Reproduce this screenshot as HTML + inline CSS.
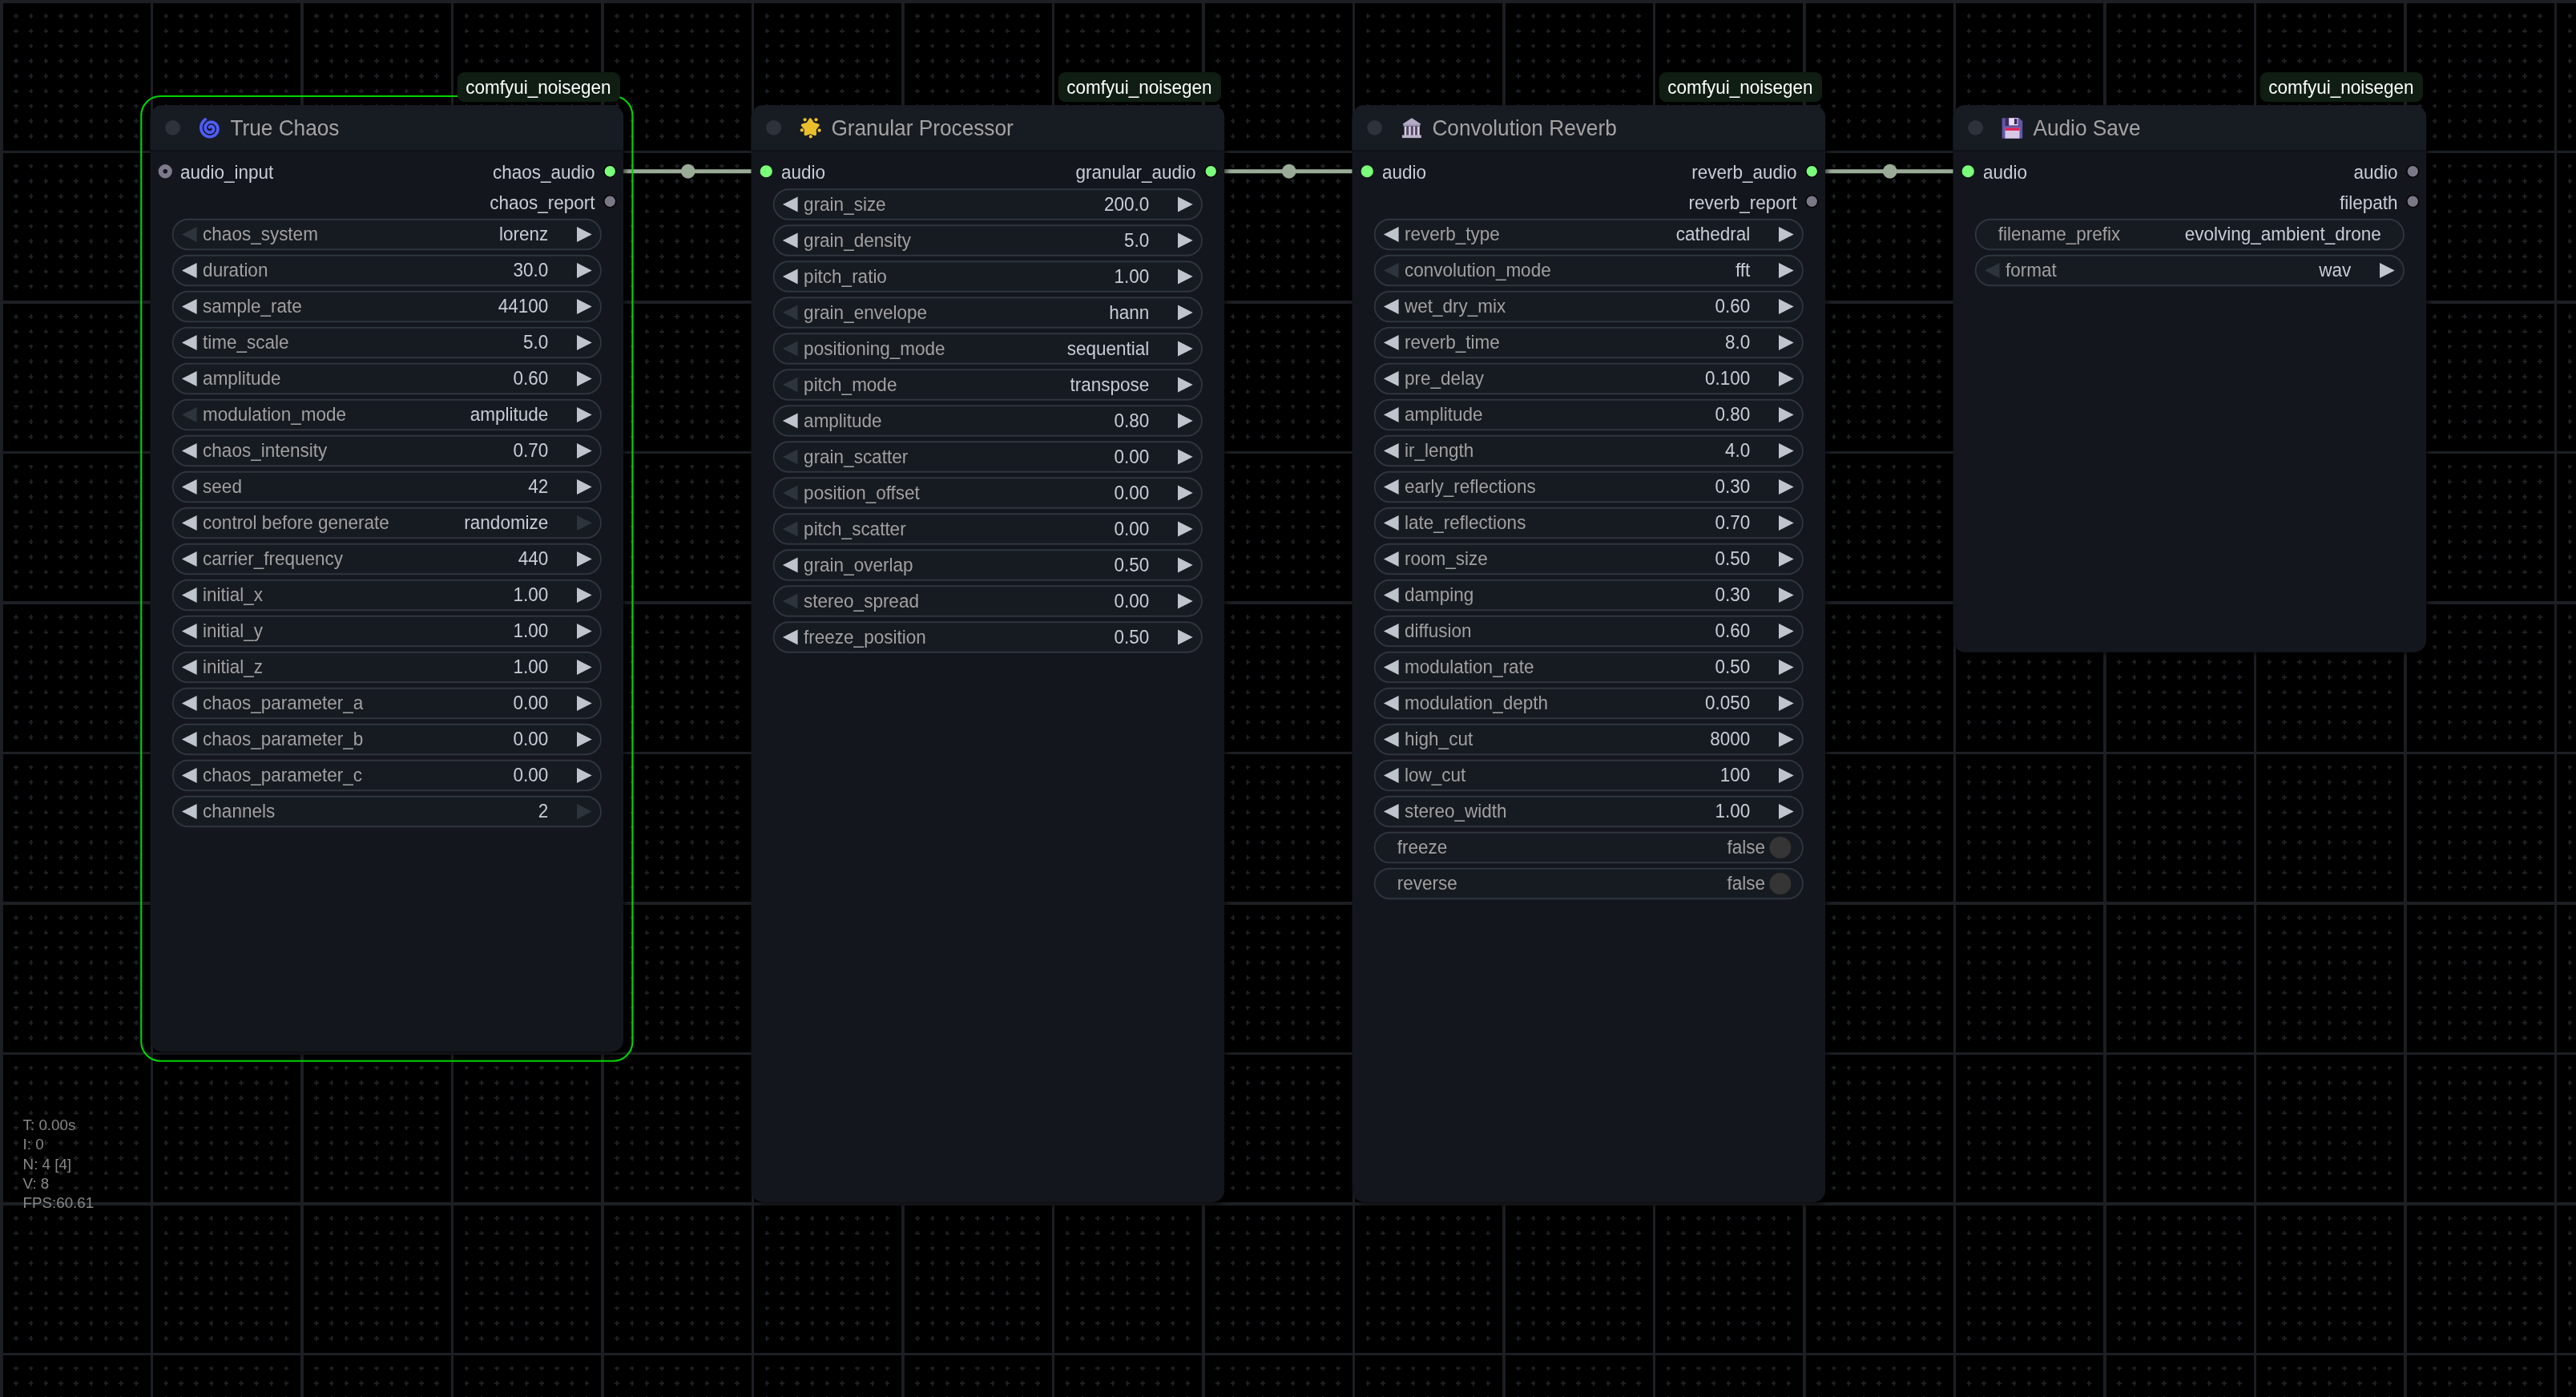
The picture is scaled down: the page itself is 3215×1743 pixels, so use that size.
<!DOCTYPE html>
<html><head><meta charset="utf-8"><title>ComfyUI</title>
<style>html,body{margin:0;padding:0;background:#000;overflow:hidden;width:3215px;height:1743px}</style>
</head><body><svg width="3215" height="1743" viewBox="0 0 3215 1743" style="display:block;will-change:transform;font-family:'Liberation Sans',sans-serif">
<defs><pattern id="g" patternUnits="userSpaceOnUse" width="375" height="375"><path fill="#1c1f23" shape-rendering="crispEdges" d="M17 19h6v2h-6zM19 17h2v6h-2zM17 38h6v2h-6zM19 36h2v5h-2zM17 56h6v2h-6zM19 55h2v5h-2zM17 75h6v2h-6zM19 73h2v6h-2zM17 94h6v2h-6zM19 92h2v6h-2zM17 113h6v2h-6zM19 111h2v5h-2zM17 131h6v2h-6zM19 130h2v5h-2zM17 150h6v2h-6zM19 148h2v6h-2zM17 169h6v2h-6zM19 167h2v6h-2zM17 206h6v2h-6zM19 205h2v5h-2zM17 225h6v2h-6zM19 223h2v6h-2zM17 244h6v2h-6zM19 242h2v6h-2zM17 263h6v2h-6zM19 261h2v5h-2zM17 281h6v2h-6zM19 280h2v5h-2zM17 300h6v2h-6zM19 298h2v6h-2zM17 319h6v2h-6zM19 317h2v6h-2zM17 338h6v2h-6zM19 336h2v5h-2zM17 356h6v2h-6zM19 355h2v5h-2zM36 19h5v2h-5zM38 17h2v6h-2zM36 38h5v2h-5zM38 36h2v5h-2zM36 56h5v2h-5zM38 55h2v5h-2zM36 75h5v2h-5zM38 73h2v6h-2zM36 94h5v2h-5zM38 92h2v6h-2zM36 113h5v2h-5zM38 111h2v5h-2zM36 131h5v2h-5zM38 130h2v5h-2zM36 150h5v2h-5zM38 148h2v6h-2zM36 169h5v2h-5zM38 167h2v6h-2zM36 206h5v2h-5zM38 205h2v5h-2zM36 225h5v2h-5zM38 223h2v6h-2zM36 244h5v2h-5zM38 242h2v6h-2zM36 263h5v2h-5zM38 261h2v5h-2zM36 281h5v2h-5zM38 280h2v5h-2zM36 300h5v2h-5zM38 298h2v6h-2zM36 319h5v2h-5zM38 317h2v6h-2zM36 338h5v2h-5zM38 336h2v5h-2zM36 356h5v2h-5zM38 355h2v5h-2zM55 19h5v2h-5zM56 17h2v6h-2zM55 38h5v2h-5zM56 36h2v5h-2zM55 56h5v2h-5zM56 55h2v5h-2zM55 75h5v2h-5zM56 73h2v6h-2zM55 94h5v2h-5zM56 92h2v6h-2zM55 113h5v2h-5zM56 111h2v5h-2zM55 131h5v2h-5zM56 130h2v5h-2zM55 150h5v2h-5zM56 148h2v6h-2zM55 169h5v2h-5zM56 167h2v6h-2zM55 206h5v2h-5zM56 205h2v5h-2zM55 225h5v2h-5zM56 223h2v6h-2zM55 244h5v2h-5zM56 242h2v6h-2zM55 263h5v2h-5zM56 261h2v5h-2zM55 281h5v2h-5zM56 280h2v5h-2zM55 300h5v2h-5zM56 298h2v6h-2zM55 319h5v2h-5zM56 317h2v6h-2zM55 338h5v2h-5zM56 336h2v5h-2zM55 356h5v2h-5zM56 355h2v5h-2zM73 19h6v2h-6zM75 17h2v6h-2zM73 38h6v2h-6zM75 36h2v5h-2zM73 56h6v2h-6zM75 55h2v5h-2zM73 75h6v2h-6zM75 73h2v6h-2zM73 94h6v2h-6zM75 92h2v6h-2zM73 113h6v2h-6zM75 111h2v5h-2zM73 131h6v2h-6zM75 130h2v5h-2zM73 150h6v2h-6zM75 148h2v6h-2zM73 169h6v2h-6zM75 167h2v6h-2zM73 206h6v2h-6zM75 205h2v5h-2zM73 225h6v2h-6zM75 223h2v6h-2zM73 244h6v2h-6zM75 242h2v6h-2zM73 263h6v2h-6zM75 261h2v5h-2zM73 281h6v2h-6zM75 280h2v5h-2zM73 300h6v2h-6zM75 298h2v6h-2zM73 319h6v2h-6zM75 317h2v6h-2zM73 338h6v2h-6zM75 336h2v5h-2zM73 356h6v2h-6zM75 355h2v5h-2zM92 19h6v2h-6zM94 17h2v6h-2zM92 38h6v2h-6zM94 36h2v5h-2zM92 56h6v2h-6zM94 55h2v5h-2zM92 75h6v2h-6zM94 73h2v6h-2zM92 94h6v2h-6zM94 92h2v6h-2zM92 113h6v2h-6zM94 111h2v5h-2zM92 131h6v2h-6zM94 130h2v5h-2zM92 150h6v2h-6zM94 148h2v6h-2zM92 169h6v2h-6zM94 167h2v6h-2zM92 206h6v2h-6zM94 205h2v5h-2zM92 225h6v2h-6zM94 223h2v6h-2zM92 244h6v2h-6zM94 242h2v6h-2zM92 263h6v2h-6zM94 261h2v5h-2zM92 281h6v2h-6zM94 280h2v5h-2zM92 300h6v2h-6zM94 298h2v6h-2zM92 319h6v2h-6zM94 317h2v6h-2zM92 338h6v2h-6zM94 336h2v5h-2zM92 356h6v2h-6zM94 355h2v5h-2zM111 19h5v2h-5zM113 17h2v6h-2zM111 38h5v2h-5zM113 36h2v5h-2zM111 56h5v2h-5zM113 55h2v5h-2zM111 75h5v2h-5zM113 73h2v6h-2zM111 94h5v2h-5zM113 92h2v6h-2zM111 113h5v2h-5zM113 111h2v5h-2zM111 131h5v2h-5zM113 130h2v5h-2zM111 150h5v2h-5zM113 148h2v6h-2zM111 169h5v2h-5zM113 167h2v6h-2zM111 206h5v2h-5zM113 205h2v5h-2zM111 225h5v2h-5zM113 223h2v6h-2zM111 244h5v2h-5zM113 242h2v6h-2zM111 263h5v2h-5zM113 261h2v5h-2zM111 281h5v2h-5zM113 280h2v5h-2zM111 300h5v2h-5zM113 298h2v6h-2zM111 319h5v2h-5zM113 317h2v6h-2zM111 338h5v2h-5zM113 336h2v5h-2zM111 356h5v2h-5zM113 355h2v5h-2zM130 19h5v2h-5zM131 17h2v6h-2zM130 38h5v2h-5zM131 36h2v5h-2zM130 56h5v2h-5zM131 55h2v5h-2zM130 75h5v2h-5zM131 73h2v6h-2zM130 94h5v2h-5zM131 92h2v6h-2zM130 113h5v2h-5zM131 111h2v5h-2zM130 131h5v2h-5zM131 130h2v5h-2zM130 150h5v2h-5zM131 148h2v6h-2zM130 169h5v2h-5zM131 167h2v6h-2zM130 206h5v2h-5zM131 205h2v5h-2zM130 225h5v2h-5zM131 223h2v6h-2zM130 244h5v2h-5zM131 242h2v6h-2zM130 263h5v2h-5zM131 261h2v5h-2zM130 281h5v2h-5zM131 280h2v5h-2zM130 300h5v2h-5zM131 298h2v6h-2zM130 319h5v2h-5zM131 317h2v6h-2zM130 338h5v2h-5zM131 336h2v5h-2zM130 356h5v2h-5zM131 355h2v5h-2zM148 19h6v2h-6zM150 17h2v6h-2zM148 38h6v2h-6zM150 36h2v5h-2zM148 56h6v2h-6zM150 55h2v5h-2zM148 75h6v2h-6zM150 73h2v6h-2zM148 94h6v2h-6zM150 92h2v6h-2zM148 113h6v2h-6zM150 111h2v5h-2zM148 131h6v2h-6zM150 130h2v5h-2zM148 150h6v2h-6zM150 148h2v6h-2zM148 169h6v2h-6zM150 167h2v6h-2zM148 206h6v2h-6zM150 205h2v5h-2zM148 225h6v2h-6zM150 223h2v6h-2zM148 244h6v2h-6zM150 242h2v6h-2zM148 263h6v2h-6zM150 261h2v5h-2zM148 281h6v2h-6zM150 280h2v5h-2zM148 300h6v2h-6zM150 298h2v6h-2zM148 319h6v2h-6zM150 317h2v6h-2zM148 338h6v2h-6zM150 336h2v5h-2zM148 356h6v2h-6zM150 355h2v5h-2zM167 19h6v2h-6zM169 17h2v6h-2zM167 38h6v2h-6zM169 36h2v5h-2zM167 56h6v2h-6zM169 55h2v5h-2zM167 75h6v2h-6zM169 73h2v6h-2zM167 94h6v2h-6zM169 92h2v6h-2zM167 113h6v2h-6zM169 111h2v5h-2zM167 131h6v2h-6zM169 130h2v5h-2zM167 150h6v2h-6zM169 148h2v6h-2zM167 169h6v2h-6zM169 167h2v6h-2zM167 206h6v2h-6zM169 205h2v5h-2zM167 225h6v2h-6zM169 223h2v6h-2zM167 244h6v2h-6zM169 242h2v6h-2zM167 263h6v2h-6zM169 261h2v5h-2zM167 281h6v2h-6zM169 280h2v5h-2zM167 300h6v2h-6zM169 298h2v6h-2zM167 319h6v2h-6zM169 317h2v6h-2zM167 338h6v2h-6zM169 336h2v5h-2zM167 356h6v2h-6zM169 355h2v5h-2zM205 19h5v2h-5zM206 17h2v6h-2zM205 38h5v2h-5zM206 36h2v5h-2zM205 56h5v2h-5zM206 55h2v5h-2zM205 75h5v2h-5zM206 73h2v6h-2zM205 94h5v2h-5zM206 92h2v6h-2zM205 113h5v2h-5zM206 111h2v5h-2zM205 131h5v2h-5zM206 130h2v5h-2zM205 150h5v2h-5zM206 148h2v6h-2zM205 169h5v2h-5zM206 167h2v6h-2zM205 206h5v2h-5zM206 205h2v5h-2zM205 225h5v2h-5zM206 223h2v6h-2zM205 244h5v2h-5zM206 242h2v6h-2zM205 263h5v2h-5zM206 261h2v5h-2zM205 281h5v2h-5zM206 280h2v5h-2zM205 300h5v2h-5zM206 298h2v6h-2zM205 319h5v2h-5zM206 317h2v6h-2zM205 338h5v2h-5zM206 336h2v5h-2zM205 356h5v2h-5zM206 355h2v5h-2zM223 19h6v2h-6zM225 17h2v6h-2zM223 38h6v2h-6zM225 36h2v5h-2zM223 56h6v2h-6zM225 55h2v5h-2zM223 75h6v2h-6zM225 73h2v6h-2zM223 94h6v2h-6zM225 92h2v6h-2zM223 113h6v2h-6zM225 111h2v5h-2zM223 131h6v2h-6zM225 130h2v5h-2zM223 150h6v2h-6zM225 148h2v6h-2zM223 169h6v2h-6zM225 167h2v6h-2zM223 206h6v2h-6zM225 205h2v5h-2zM223 225h6v2h-6zM225 223h2v6h-2zM223 244h6v2h-6zM225 242h2v6h-2zM223 263h6v2h-6zM225 261h2v5h-2zM223 281h6v2h-6zM225 280h2v5h-2zM223 300h6v2h-6zM225 298h2v6h-2zM223 319h6v2h-6zM225 317h2v6h-2zM223 338h6v2h-6zM225 336h2v5h-2zM223 356h6v2h-6zM225 355h2v5h-2zM242 19h6v2h-6zM244 17h2v6h-2zM242 38h6v2h-6zM244 36h2v5h-2zM242 56h6v2h-6zM244 55h2v5h-2zM242 75h6v2h-6zM244 73h2v6h-2zM242 94h6v2h-6zM244 92h2v6h-2zM242 113h6v2h-6zM244 111h2v5h-2zM242 131h6v2h-6zM244 130h2v5h-2zM242 150h6v2h-6zM244 148h2v6h-2zM242 169h6v2h-6zM244 167h2v6h-2zM242 206h6v2h-6zM244 205h2v5h-2zM242 225h6v2h-6zM244 223h2v6h-2zM242 244h6v2h-6zM244 242h2v6h-2zM242 263h6v2h-6zM244 261h2v5h-2zM242 281h6v2h-6zM244 280h2v5h-2zM242 300h6v2h-6zM244 298h2v6h-2zM242 319h6v2h-6zM244 317h2v6h-2zM242 338h6v2h-6zM244 336h2v5h-2zM242 356h6v2h-6zM244 355h2v5h-2zM261 19h5v2h-5zM263 17h2v6h-2zM261 38h5v2h-5zM263 36h2v5h-2zM261 56h5v2h-5zM263 55h2v5h-2zM261 75h5v2h-5zM263 73h2v6h-2zM261 94h5v2h-5zM263 92h2v6h-2zM261 113h5v2h-5zM263 111h2v5h-2zM261 131h5v2h-5zM263 130h2v5h-2zM261 150h5v2h-5zM263 148h2v6h-2zM261 169h5v2h-5zM263 167h2v6h-2zM261 206h5v2h-5zM263 205h2v5h-2zM261 225h5v2h-5zM263 223h2v6h-2zM261 244h5v2h-5zM263 242h2v6h-2zM261 263h5v2h-5zM263 261h2v5h-2zM261 281h5v2h-5zM263 280h2v5h-2zM261 300h5v2h-5zM263 298h2v6h-2zM261 319h5v2h-5zM263 317h2v6h-2zM261 338h5v2h-5zM263 336h2v5h-2zM261 356h5v2h-5zM263 355h2v5h-2zM280 19h5v2h-5zM281 17h2v6h-2zM280 38h5v2h-5zM281 36h2v5h-2zM280 56h5v2h-5zM281 55h2v5h-2zM280 75h5v2h-5zM281 73h2v6h-2zM280 94h5v2h-5zM281 92h2v6h-2zM280 113h5v2h-5zM281 111h2v5h-2zM280 131h5v2h-5zM281 130h2v5h-2zM280 150h5v2h-5zM281 148h2v6h-2zM280 169h5v2h-5zM281 167h2v6h-2zM280 206h5v2h-5zM281 205h2v5h-2zM280 225h5v2h-5zM281 223h2v6h-2zM280 244h5v2h-5zM281 242h2v6h-2zM280 263h5v2h-5zM281 261h2v5h-2zM280 281h5v2h-5zM281 280h2v5h-2zM280 300h5v2h-5zM281 298h2v6h-2zM280 319h5v2h-5zM281 317h2v6h-2zM280 338h5v2h-5zM281 336h2v5h-2zM280 356h5v2h-5zM281 355h2v5h-2zM298 19h6v2h-6zM300 17h2v6h-2zM298 38h6v2h-6zM300 36h2v5h-2zM298 56h6v2h-6zM300 55h2v5h-2zM298 75h6v2h-6zM300 73h2v6h-2zM298 94h6v2h-6zM300 92h2v6h-2zM298 113h6v2h-6zM300 111h2v5h-2zM298 131h6v2h-6zM300 130h2v5h-2zM298 150h6v2h-6zM300 148h2v6h-2zM298 169h6v2h-6zM300 167h2v6h-2zM298 206h6v2h-6zM300 205h2v5h-2zM298 225h6v2h-6zM300 223h2v6h-2zM298 244h6v2h-6zM300 242h2v6h-2zM298 263h6v2h-6zM300 261h2v5h-2zM298 281h6v2h-6zM300 280h2v5h-2zM298 300h6v2h-6zM300 298h2v6h-2zM298 319h6v2h-6zM300 317h2v6h-2zM298 338h6v2h-6zM300 336h2v5h-2zM298 356h6v2h-6zM300 355h2v5h-2zM317 19h6v2h-6zM319 17h2v6h-2zM317 38h6v2h-6zM319 36h2v5h-2zM317 56h6v2h-6zM319 55h2v5h-2zM317 75h6v2h-6zM319 73h2v6h-2zM317 94h6v2h-6zM319 92h2v6h-2zM317 113h6v2h-6zM319 111h2v5h-2zM317 131h6v2h-6zM319 130h2v5h-2zM317 150h6v2h-6zM319 148h2v6h-2zM317 169h6v2h-6zM319 167h2v6h-2zM317 206h6v2h-6zM319 205h2v5h-2zM317 225h6v2h-6zM319 223h2v6h-2zM317 244h6v2h-6zM319 242h2v6h-2zM317 263h6v2h-6zM319 261h2v5h-2zM317 281h6v2h-6zM319 280h2v5h-2zM317 300h6v2h-6zM319 298h2v6h-2zM317 319h6v2h-6zM319 317h2v6h-2zM317 338h6v2h-6zM319 336h2v5h-2zM317 356h6v2h-6zM319 355h2v5h-2zM336 19h5v2h-5zM338 17h2v6h-2zM336 38h5v2h-5zM338 36h2v5h-2zM336 56h5v2h-5zM338 55h2v5h-2zM336 75h5v2h-5zM338 73h2v6h-2zM336 94h5v2h-5zM338 92h2v6h-2zM336 113h5v2h-5zM338 111h2v5h-2zM336 131h5v2h-5zM338 130h2v5h-2zM336 150h5v2h-5zM338 148h2v6h-2zM336 169h5v2h-5zM338 167h2v6h-2zM336 206h5v2h-5zM338 205h2v5h-2zM336 225h5v2h-5zM338 223h2v6h-2zM336 244h5v2h-5zM338 242h2v6h-2zM336 263h5v2h-5zM338 261h2v5h-2zM336 281h5v2h-5zM338 280h2v5h-2zM336 300h5v2h-5zM338 298h2v6h-2zM336 319h5v2h-5zM338 317h2v6h-2zM336 338h5v2h-5zM338 336h2v5h-2zM336 356h5v2h-5zM338 355h2v5h-2zM355 19h5v2h-5zM356 17h2v6h-2zM355 38h5v2h-5zM356 36h2v5h-2zM355 56h5v2h-5zM356 55h2v5h-2zM355 75h5v2h-5zM356 73h2v6h-2zM355 94h5v2h-5zM356 92h2v6h-2zM355 113h5v2h-5zM356 111h2v5h-2zM355 131h5v2h-5zM356 130h2v5h-2zM355 150h5v2h-5zM356 148h2v6h-2zM355 169h5v2h-5zM356 167h2v6h-2zM355 206h5v2h-5zM356 205h2v5h-2zM355 225h5v2h-5zM356 223h2v6h-2zM355 244h5v2h-5zM356 242h2v6h-2zM355 263h5v2h-5zM356 261h2v5h-2zM355 281h5v2h-5zM356 280h2v5h-2zM355 300h5v2h-5zM356 298h2v6h-2zM355 319h5v2h-5zM356 317h2v6h-2zM355 338h5v2h-5zM356 336h2v5h-2zM355 356h5v2h-5zM356 355h2v5h-2z"/><path fill="#1c1f23" d="M0 0h3.9v375h-3.9zM188 0h3v375h-3zM0 0h375v3.9h-375zM0 188h375v3h-375z"/></pattern><filter id="sh" color-interpolation-filters="sRGB" x="-5%" y="-5%" width="110%" height="110%"><feDropShadow dx="3.75" dy="3.75" stdDeviation="2.8" flood-color="#000" flood-opacity="0.5"/></filter></defs>
<rect width="3215" height="1743" fill="#000000"/>
<rect width="3215" height="1743" fill="url(#g)"/>
<rect x="761.25" y="211.25" width="195" height="5" fill="#9aab98"/>
<circle cx="858.75" cy="213.75" r="8.9" fill="#9aab98"/>
<rect x="1511.25" y="211.25" width="195" height="5" fill="#9aab98"/>
<circle cx="1608.75" cy="213.75" r="8.9" fill="#9aab98"/>
<rect x="2261.25" y="211.25" width="195" height="5" fill="#9aab98"/>
<circle cx="2358.75" cy="213.75" r="8.9" fill="#9aab98"/>
<rect x="176.25" y="120" width="613.12" height="1203.75" rx="24" fill="none" stroke="#00d400" stroke-width="2.1"/>
<rect x="187.5" y="131.25" width="590.62" height="1181.25" rx="15" fill="#13161d" filter="url(#sh)"/>
<path d="M187.5 187.5v-41.25a15 15 0 0 1 15 -15h560.62a15 15 0 0 1 15 15v41.25z" fill="#171b22"/>
<rect x="187.5" y="187.7" width="590.62" height="1.4" fill="#101217"/>
<circle cx="215.62" cy="159.38" r="9.4" fill="#2e333b"/>
<path d="M256.32 149.06 L254.91 150.16 L253.67 151.45 L252.64 152.88 L251.83 154.43 L251.25 156.06 L250.91 157.74 L250.82 159.43 L250.97 161.1 L251.34 162.72 L251.94 164.25 L252.74 165.67 L253.72 166.95 L254.86 168.06 L256.14 168.99 L257.51 169.72 L258.97 170.24 L260.46 170.54 L261.96 170.63 L263.45 170.51 L264.88 170.18 L266.24 169.66 L267.5 168.96 L268.63 168.09 L269.61 167.09 L270.43 165.97 L271.08 164.76 L271.54 163.49 L271.81 162.18 L271.89 160.87 L271.78 159.57 L271.5 158.32 L271.05 157.14 L270.44 156.04 L269.69 155.06 L268.82 154.21 L267.85 153.5 L266.81 152.95 L265.72 152.55 L264.59 152.32 L263.46 152.25 L262.35 152.35 L261.29 152.59 L260.28 152.98 L259.35 153.5 L258.53 154.14 L257.81 154.88 L257.22 155.7 L256.76 156.58 L256.43 157.5 L256.24 158.44 L256.19 159.38 L256.28 160.3 L256.49 161.18 L256.82 162.01 L257.26 162.77 L257.79 163.44 L258.4 164.02 L259.07 164.49 L259.79 164.85 L260.54 165.1 L261.3 165.24 L262.06 165.27 L262.79 165.18 L263.49 165 L264.13 164.72 L264.72 164.37 L265.23 163.94 L265.67 163.45 L266.02 162.92 L266.28 162.36 L266.45 161.78 L266.54 161.2 L266.53 160.63 L266.45 160.09 L266.29 159.57 L266.06 159.11 L265.78 158.69 L265.44 158.34 L265.08 158.05 L264.68 157.83 L264.28 157.67 L263.87 157.58 L263.47 157.56 L263.08 157.6 L262.72 157.69 L262.4 157.83 L262.12 158.02 L261.88 158.23 L261.68 158.47 L261.54 158.72" fill="none" stroke="#4f5cff" stroke-width="3.7" stroke-linecap="round"/>
<text x="287.4" y="169" font-size="26.25" fill="#a3a3a3" transform="matrix(1 0 0 1.03 0 -5.070)">True Chaos</text>
<circle cx="206.25" cy="213.75" r="5.7" fill="none" stroke="#7d7a8c" stroke-width="5.9"/>
<text x="225" y="223.22" font-size="22.5" fill="#c8ccd4" transform="matrix(1 0 0 1.08 0 -17.858)">audio_input</text>
<circle cx="761.25" cy="213.75" r="7.4" fill="#7aff7a" stroke="#000" stroke-width="1.4"/>
<text x="742.5" y="223.22" font-size="22.5" fill="#c8ccd4" text-anchor="end" transform="matrix(1 0 0 1.08 0 -17.858)">chaos_audio</text>
<circle cx="761.25" cy="251.25" r="7.4" fill="#7a7886" stroke="#000" stroke-width="1.4"/>
<text x="742.5" y="260.73" font-size="22.5" fill="#c8ccd4" text-anchor="end" transform="matrix(1 0 0 1.08 0 -20.858)">chaos_report</text>
<rect x="215.62" y="273.75" width="534.38" height="37.5" rx="18.75" fill="#161a21" stroke="#30363e" stroke-width="1.8"/>
<path d="M245.62 283.12L226.88 292.5L245.62 301.88z" fill="#2e343b"/>
<path d="M720 283.12L738.75 292.5L720 301.88z" fill="#c0c4cc"/>
<text x="253.12" y="300.1" font-size="22.5" fill="#a0a0a0" transform="matrix(1 0 0 1.08 0 -24.008)">chaos_system</text>
<text x="684.38" y="300.1" font-size="22.5" fill="#c8ccd4" text-anchor="end" transform="matrix(1 0 0 1.08 0 -24.008)">lorenz</text>
<rect x="215.62" y="318.75" width="534.38" height="37.5" rx="18.75" fill="#161a21" stroke="#30363e" stroke-width="1.8"/>
<path d="M245.62 328.12L226.88 337.5L245.62 346.88z" fill="#c0c4cc"/>
<path d="M720 328.12L738.75 337.5L720 346.88z" fill="#c0c4cc"/>
<text x="253.12" y="345.1" font-size="22.5" fill="#a0a0a0" transform="matrix(1 0 0 1.08 0 -27.608)">duration</text>
<text x="684.38" y="345.1" font-size="22.5" fill="#c8ccd4" text-anchor="end" transform="matrix(1 0 0 1.08 0 -27.608)">30.0</text>
<rect x="215.62" y="363.75" width="534.38" height="37.5" rx="18.75" fill="#161a21" stroke="#30363e" stroke-width="1.8"/>
<path d="M245.62 373.12L226.88 382.5L245.62 391.88z" fill="#c0c4cc"/>
<path d="M720 373.12L738.75 382.5L720 391.88z" fill="#c0c4cc"/>
<text x="253.12" y="390.1" font-size="22.5" fill="#a0a0a0" transform="matrix(1 0 0 1.08 0 -31.208)">sample_rate</text>
<text x="684.38" y="390.1" font-size="22.5" fill="#c8ccd4" text-anchor="end" transform="matrix(1 0 0 1.08 0 -31.208)">44100</text>
<rect x="215.62" y="408.75" width="534.38" height="37.5" rx="18.75" fill="#161a21" stroke="#30363e" stroke-width="1.8"/>
<path d="M245.62 418.12L226.88 427.5L245.62 436.88z" fill="#c0c4cc"/>
<path d="M720 418.12L738.75 427.5L720 436.88z" fill="#c0c4cc"/>
<text x="253.12" y="435.1" font-size="22.5" fill="#a0a0a0" transform="matrix(1 0 0 1.08 0 -34.808)">time_scale</text>
<text x="684.38" y="435.1" font-size="22.5" fill="#c8ccd4" text-anchor="end" transform="matrix(1 0 0 1.08 0 -34.808)">5.0</text>
<rect x="215.62" y="453.75" width="534.38" height="37.5" rx="18.75" fill="#161a21" stroke="#30363e" stroke-width="1.8"/>
<path d="M245.62 463.12L226.88 472.5L245.62 481.88z" fill="#c0c4cc"/>
<path d="M720 463.12L738.75 472.5L720 481.88z" fill="#c0c4cc"/>
<text x="253.12" y="480.1" font-size="22.5" fill="#a0a0a0" transform="matrix(1 0 0 1.08 0 -38.408)">amplitude</text>
<text x="684.38" y="480.1" font-size="22.5" fill="#c8ccd4" text-anchor="end" transform="matrix(1 0 0 1.08 0 -38.408)">0.60</text>
<rect x="215.62" y="498.75" width="534.38" height="37.5" rx="18.75" fill="#161a21" stroke="#30363e" stroke-width="1.8"/>
<path d="M245.62 508.12L226.88 517.5L245.62 526.88z" fill="#2e343b"/>
<path d="M720 508.12L738.75 517.5L720 526.88z" fill="#c0c4cc"/>
<text x="253.12" y="525.1" font-size="22.5" fill="#a0a0a0" transform="matrix(1 0 0 1.08 0 -42.008)">modulation_mode</text>
<text x="684.38" y="525.1" font-size="22.5" fill="#c8ccd4" text-anchor="end" transform="matrix(1 0 0 1.08 0 -42.008)">amplitude</text>
<rect x="215.62" y="543.75" width="534.38" height="37.5" rx="18.75" fill="#161a21" stroke="#30363e" stroke-width="1.8"/>
<path d="M245.62 553.12L226.88 562.5L245.62 571.88z" fill="#c0c4cc"/>
<path d="M720 553.12L738.75 562.5L720 571.88z" fill="#c0c4cc"/>
<text x="253.12" y="570.1" font-size="22.5" fill="#a0a0a0" transform="matrix(1 0 0 1.08 0 -45.608)">chaos_intensity</text>
<text x="684.38" y="570.1" font-size="22.5" fill="#c8ccd4" text-anchor="end" transform="matrix(1 0 0 1.08 0 -45.608)">0.70</text>
<rect x="215.62" y="588.75" width="534.38" height="37.5" rx="18.75" fill="#161a21" stroke="#30363e" stroke-width="1.8"/>
<path d="M245.62 598.12L226.88 607.5L245.62 616.88z" fill="#c0c4cc"/>
<path d="M720 598.12L738.75 607.5L720 616.88z" fill="#c0c4cc"/>
<text x="253.12" y="615.1" font-size="22.5" fill="#a0a0a0" transform="matrix(1 0 0 1.08 0 -49.208)">seed</text>
<text x="684.38" y="615.1" font-size="22.5" fill="#c8ccd4" text-anchor="end" transform="matrix(1 0 0 1.08 0 -49.208)">42</text>
<rect x="215.62" y="633.75" width="534.38" height="37.5" rx="18.75" fill="#161a21" stroke="#30363e" stroke-width="1.8"/>
<path d="M245.62 643.12L226.88 652.5L245.62 661.88z" fill="#c0c4cc"/>
<path d="M720 643.12L738.75 652.5L720 661.88z" fill="#2e343b"/>
<text x="253.12" y="660.1" font-size="22.5" fill="#a0a0a0" transform="matrix(1 0 0 1.08 0 -52.808)">control before generate</text>
<text x="684.38" y="660.1" font-size="22.5" fill="#c8ccd4" text-anchor="end" transform="matrix(1 0 0 1.08 0 -52.808)">randomize</text>
<rect x="215.62" y="678.75" width="534.38" height="37.5" rx="18.75" fill="#161a21" stroke="#30363e" stroke-width="1.8"/>
<path d="M245.62 688.12L226.88 697.5L245.62 706.88z" fill="#c0c4cc"/>
<path d="M720 688.12L738.75 697.5L720 706.88z" fill="#c0c4cc"/>
<text x="253.12" y="705.1" font-size="22.5" fill="#a0a0a0" transform="matrix(1 0 0 1.08 0 -56.408)">carrier_frequency</text>
<text x="684.38" y="705.1" font-size="22.5" fill="#c8ccd4" text-anchor="end" transform="matrix(1 0 0 1.08 0 -56.408)">440</text>
<rect x="215.62" y="723.75" width="534.38" height="37.5" rx="18.75" fill="#161a21" stroke="#30363e" stroke-width="1.8"/>
<path d="M245.62 733.12L226.88 742.5L245.62 751.88z" fill="#c0c4cc"/>
<path d="M720 733.12L738.75 742.5L720 751.88z" fill="#c0c4cc"/>
<text x="253.12" y="750.1" font-size="22.5" fill="#a0a0a0" transform="matrix(1 0 0 1.08 0 -60.008)">initial_x</text>
<text x="684.38" y="750.1" font-size="22.5" fill="#c8ccd4" text-anchor="end" transform="matrix(1 0 0 1.08 0 -60.008)">1.00</text>
<rect x="215.62" y="768.75" width="534.38" height="37.5" rx="18.75" fill="#161a21" stroke="#30363e" stroke-width="1.8"/>
<path d="M245.62 778.12L226.88 787.5L245.62 796.88z" fill="#c0c4cc"/>
<path d="M720 778.12L738.75 787.5L720 796.88z" fill="#c0c4cc"/>
<text x="253.12" y="795.1" font-size="22.5" fill="#a0a0a0" transform="matrix(1 0 0 1.08 0 -63.608)">initial_y</text>
<text x="684.38" y="795.1" font-size="22.5" fill="#c8ccd4" text-anchor="end" transform="matrix(1 0 0 1.08 0 -63.608)">1.00</text>
<rect x="215.62" y="813.75" width="534.38" height="37.5" rx="18.75" fill="#161a21" stroke="#30363e" stroke-width="1.8"/>
<path d="M245.62 823.12L226.88 832.5L245.62 841.88z" fill="#c0c4cc"/>
<path d="M720 823.12L738.75 832.5L720 841.88z" fill="#c0c4cc"/>
<text x="253.12" y="840.1" font-size="22.5" fill="#a0a0a0" transform="matrix(1 0 0 1.08 0 -67.208)">initial_z</text>
<text x="684.38" y="840.1" font-size="22.5" fill="#c8ccd4" text-anchor="end" transform="matrix(1 0 0 1.08 0 -67.208)">1.00</text>
<rect x="215.62" y="858.75" width="534.38" height="37.5" rx="18.75" fill="#161a21" stroke="#30363e" stroke-width="1.8"/>
<path d="M245.62 868.12L226.88 877.5L245.62 886.88z" fill="#c0c4cc"/>
<path d="M720 868.12L738.75 877.5L720 886.88z" fill="#c0c4cc"/>
<text x="253.12" y="885.1" font-size="22.5" fill="#a0a0a0" transform="matrix(1 0 0 1.08 0 -70.808)">chaos_parameter_a</text>
<text x="684.38" y="885.1" font-size="22.5" fill="#c8ccd4" text-anchor="end" transform="matrix(1 0 0 1.08 0 -70.808)">0.00</text>
<rect x="215.62" y="903.75" width="534.38" height="37.5" rx="18.75" fill="#161a21" stroke="#30363e" stroke-width="1.8"/>
<path d="M245.62 913.12L226.88 922.5L245.62 931.88z" fill="#c0c4cc"/>
<path d="M720 913.12L738.75 922.5L720 931.88z" fill="#c0c4cc"/>
<text x="253.12" y="930.1" font-size="22.5" fill="#a0a0a0" transform="matrix(1 0 0 1.08 0 -74.408)">chaos_parameter_b</text>
<text x="684.38" y="930.1" font-size="22.5" fill="#c8ccd4" text-anchor="end" transform="matrix(1 0 0 1.08 0 -74.408)">0.00</text>
<rect x="215.62" y="948.75" width="534.38" height="37.5" rx="18.75" fill="#161a21" stroke="#30363e" stroke-width="1.8"/>
<path d="M245.62 958.12L226.88 967.5L245.62 976.88z" fill="#c0c4cc"/>
<path d="M720 958.12L738.75 967.5L720 976.88z" fill="#c0c4cc"/>
<text x="253.12" y="975.1" font-size="22.5" fill="#a0a0a0" transform="matrix(1 0 0 1.08 0 -78.008)">chaos_parameter_c</text>
<text x="684.38" y="975.1" font-size="22.5" fill="#c8ccd4" text-anchor="end" transform="matrix(1 0 0 1.08 0 -78.008)">0.00</text>
<rect x="215.62" y="993.75" width="534.38" height="37.5" rx="18.75" fill="#161a21" stroke="#30363e" stroke-width="1.8"/>
<path d="M245.62 1003.12L226.88 1012.5L245.62 1021.88z" fill="#c0c4cc"/>
<path d="M720 1003.12L738.75 1012.5L720 1021.88z" fill="#2e343b"/>
<text x="253.12" y="1020.1" font-size="22.5" fill="#a0a0a0" transform="matrix(1 0 0 1.08 0 -81.608)">channels</text>
<text x="684.38" y="1020.1" font-size="22.5" fill="#c8ccd4" text-anchor="end" transform="matrix(1 0 0 1.08 0 -81.608)">2</text>
<rect x="937.5" y="131.25" width="590.62" height="1368.75" rx="15" fill="#13161d" filter="url(#sh)"/>
<path d="M937.5 187.5v-41.25a15 15 0 0 1 15 -15h560.62a15 15 0 0 1 15 15v41.25z" fill="#171b22"/>
<rect x="937.5" y="187.7" width="590.62" height="1.4" fill="#101217"/>
<circle cx="965.62" cy="159.38" r="9.4" fill="#2e333b"/>
<polygon points="1011.3,149.1 1014.83,154.45 1021,156.15 1017.01,161.15 1017.3,167.55 1011.3,165.3 1005.3,167.55 1005.59,161.15 1001.6,156.15 1007.77,154.45" fill="#e9bf2c" stroke="#e9bf2c" stroke-width="3.4" stroke-linejoin="round"/>
<circle cx="1004.6" cy="149.3" r="2.1" fill="#efc22a"/>
<circle cx="1018.5" cy="149.3" r="2.1" fill="#efc22a"/>
<circle cx="1000.8" cy="162.4" r="2.1" fill="#efc22a"/>
<circle cx="1022.6" cy="162.7" r="2.1" fill="#efc22a"/>
<circle cx="1011.8" cy="170.4" r="2.1" fill="#efc22a"/>
<text x="1037.4" y="169" font-size="26.25" fill="#a3a3a3" transform="matrix(1 0 0 1.03 0 -5.070)">Granular Processor</text>
<circle cx="956.25" cy="213.75" r="7.6" fill="#7aff7a"/>
<text x="975" y="223.22" font-size="22.5" fill="#c8ccd4" transform="matrix(1 0 0 1.08 0 -17.858)">audio</text>
<circle cx="1511.25" cy="213.75" r="7.4" fill="#7aff7a" stroke="#000" stroke-width="1.4"/>
<text x="1492.5" y="223.22" font-size="22.5" fill="#c8ccd4" text-anchor="end" transform="matrix(1 0 0 1.08 0 -17.858)">granular_audio</text>
<rect x="965.62" y="236.25" width="534.38" height="37.5" rx="18.75" fill="#161a21" stroke="#30363e" stroke-width="1.8"/>
<path d="M995.62 245.62L976.88 255L995.62 264.38z" fill="#c0c4cc"/>
<path d="M1470 245.62L1488.75 255L1470 264.38z" fill="#c0c4cc"/>
<text x="1003.12" y="262.6" font-size="22.5" fill="#a0a0a0" transform="matrix(1 0 0 1.08 0 -21.008)">grain_size</text>
<text x="1434.38" y="262.6" font-size="22.5" fill="#c8ccd4" text-anchor="end" transform="matrix(1 0 0 1.08 0 -21.008)">200.0</text>
<rect x="965.62" y="281.25" width="534.38" height="37.5" rx="18.75" fill="#161a21" stroke="#30363e" stroke-width="1.8"/>
<path d="M995.62 290.62L976.88 300L995.62 309.38z" fill="#c0c4cc"/>
<path d="M1470 290.62L1488.75 300L1470 309.38z" fill="#c0c4cc"/>
<text x="1003.12" y="307.6" font-size="22.5" fill="#a0a0a0" transform="matrix(1 0 0 1.08 0 -24.608)">grain_density</text>
<text x="1434.38" y="307.6" font-size="22.5" fill="#c8ccd4" text-anchor="end" transform="matrix(1 0 0 1.08 0 -24.608)">5.0</text>
<rect x="965.62" y="326.25" width="534.38" height="37.5" rx="18.75" fill="#161a21" stroke="#30363e" stroke-width="1.8"/>
<path d="M995.62 335.62L976.88 345L995.62 354.38z" fill="#c0c4cc"/>
<path d="M1470 335.62L1488.75 345L1470 354.38z" fill="#c0c4cc"/>
<text x="1003.12" y="352.6" font-size="22.5" fill="#a0a0a0" transform="matrix(1 0 0 1.08 0 -28.208)">pitch_ratio</text>
<text x="1434.38" y="352.6" font-size="22.5" fill="#c8ccd4" text-anchor="end" transform="matrix(1 0 0 1.08 0 -28.208)">1.00</text>
<rect x="965.62" y="371.25" width="534.38" height="37.5" rx="18.75" fill="#161a21" stroke="#30363e" stroke-width="1.8"/>
<path d="M995.62 380.62L976.88 390L995.62 399.38z" fill="#2e343b"/>
<path d="M1470 380.62L1488.75 390L1470 399.38z" fill="#c0c4cc"/>
<text x="1003.12" y="397.6" font-size="22.5" fill="#a0a0a0" transform="matrix(1 0 0 1.08 0 -31.808)">grain_envelope</text>
<text x="1434.38" y="397.6" font-size="22.5" fill="#c8ccd4" text-anchor="end" transform="matrix(1 0 0 1.08 0 -31.808)">hann</text>
<rect x="965.62" y="416.25" width="534.38" height="37.5" rx="18.75" fill="#161a21" stroke="#30363e" stroke-width="1.8"/>
<path d="M995.62 425.62L976.88 435L995.62 444.38z" fill="#2e343b"/>
<path d="M1470 425.62L1488.75 435L1470 444.38z" fill="#c0c4cc"/>
<text x="1003.12" y="442.6" font-size="22.5" fill="#a0a0a0" transform="matrix(1 0 0 1.08 0 -35.408)">positioning_mode</text>
<text x="1434.38" y="442.6" font-size="22.5" fill="#c8ccd4" text-anchor="end" transform="matrix(1 0 0 1.08 0 -35.408)">sequential</text>
<rect x="965.62" y="461.25" width="534.38" height="37.5" rx="18.75" fill="#161a21" stroke="#30363e" stroke-width="1.8"/>
<path d="M995.62 470.62L976.88 480L995.62 489.38z" fill="#2e343b"/>
<path d="M1470 470.62L1488.75 480L1470 489.38z" fill="#c0c4cc"/>
<text x="1003.12" y="487.6" font-size="22.5" fill="#a0a0a0" transform="matrix(1 0 0 1.08 0 -39.008)">pitch_mode</text>
<text x="1434.38" y="487.6" font-size="22.5" fill="#c8ccd4" text-anchor="end" transform="matrix(1 0 0 1.08 0 -39.008)">transpose</text>
<rect x="965.62" y="506.25" width="534.38" height="37.5" rx="18.75" fill="#161a21" stroke="#30363e" stroke-width="1.8"/>
<path d="M995.62 515.62L976.88 525L995.62 534.38z" fill="#c0c4cc"/>
<path d="M1470 515.62L1488.75 525L1470 534.38z" fill="#c0c4cc"/>
<text x="1003.12" y="532.6" font-size="22.5" fill="#a0a0a0" transform="matrix(1 0 0 1.08 0 -42.608)">amplitude</text>
<text x="1434.38" y="532.6" font-size="22.5" fill="#c8ccd4" text-anchor="end" transform="matrix(1 0 0 1.08 0 -42.608)">0.80</text>
<rect x="965.62" y="551.25" width="534.38" height="37.5" rx="18.75" fill="#161a21" stroke="#30363e" stroke-width="1.8"/>
<path d="M995.62 560.62L976.88 570L995.62 579.38z" fill="#2e343b"/>
<path d="M1470 560.62L1488.75 570L1470 579.38z" fill="#c0c4cc"/>
<text x="1003.12" y="577.6" font-size="22.5" fill="#a0a0a0" transform="matrix(1 0 0 1.08 0 -46.208)">grain_scatter</text>
<text x="1434.38" y="577.6" font-size="22.5" fill="#c8ccd4" text-anchor="end" transform="matrix(1 0 0 1.08 0 -46.208)">0.00</text>
<rect x="965.62" y="596.25" width="534.38" height="37.5" rx="18.75" fill="#161a21" stroke="#30363e" stroke-width="1.8"/>
<path d="M995.62 605.62L976.88 615L995.62 624.38z" fill="#2e343b"/>
<path d="M1470 605.62L1488.75 615L1470 624.38z" fill="#c0c4cc"/>
<text x="1003.12" y="622.6" font-size="22.5" fill="#a0a0a0" transform="matrix(1 0 0 1.08 0 -49.808)">position_offset</text>
<text x="1434.38" y="622.6" font-size="22.5" fill="#c8ccd4" text-anchor="end" transform="matrix(1 0 0 1.08 0 -49.808)">0.00</text>
<rect x="965.62" y="641.25" width="534.38" height="37.5" rx="18.75" fill="#161a21" stroke="#30363e" stroke-width="1.8"/>
<path d="M995.62 650.62L976.88 660L995.62 669.38z" fill="#2e343b"/>
<path d="M1470 650.62L1488.75 660L1470 669.38z" fill="#c0c4cc"/>
<text x="1003.12" y="667.6" font-size="22.5" fill="#a0a0a0" transform="matrix(1 0 0 1.08 0 -53.408)">pitch_scatter</text>
<text x="1434.38" y="667.6" font-size="22.5" fill="#c8ccd4" text-anchor="end" transform="matrix(1 0 0 1.08 0 -53.408)">0.00</text>
<rect x="965.62" y="686.25" width="534.38" height="37.5" rx="18.75" fill="#161a21" stroke="#30363e" stroke-width="1.8"/>
<path d="M995.62 695.62L976.88 705L995.62 714.38z" fill="#c0c4cc"/>
<path d="M1470 695.62L1488.75 705L1470 714.38z" fill="#c0c4cc"/>
<text x="1003.12" y="712.6" font-size="22.5" fill="#a0a0a0" transform="matrix(1 0 0 1.08 0 -57.008)">grain_overlap</text>
<text x="1434.38" y="712.6" font-size="22.5" fill="#c8ccd4" text-anchor="end" transform="matrix(1 0 0 1.08 0 -57.008)">0.50</text>
<rect x="965.62" y="731.25" width="534.38" height="37.5" rx="18.75" fill="#161a21" stroke="#30363e" stroke-width="1.8"/>
<path d="M995.62 740.62L976.88 750L995.62 759.38z" fill="#2e343b"/>
<path d="M1470 740.62L1488.75 750L1470 759.38z" fill="#c0c4cc"/>
<text x="1003.12" y="757.6" font-size="22.5" fill="#a0a0a0" transform="matrix(1 0 0 1.08 0 -60.608)">stereo_spread</text>
<text x="1434.38" y="757.6" font-size="22.5" fill="#c8ccd4" text-anchor="end" transform="matrix(1 0 0 1.08 0 -60.608)">0.00</text>
<rect x="965.62" y="776.25" width="534.38" height="37.5" rx="18.75" fill="#161a21" stroke="#30363e" stroke-width="1.8"/>
<path d="M995.62 785.62L976.88 795L995.62 804.38z" fill="#c0c4cc"/>
<path d="M1470 785.62L1488.75 795L1470 804.38z" fill="#c0c4cc"/>
<text x="1003.12" y="802.6" font-size="22.5" fill="#a0a0a0" transform="matrix(1 0 0 1.08 0 -64.208)">freeze_position</text>
<text x="1434.38" y="802.6" font-size="22.5" fill="#c8ccd4" text-anchor="end" transform="matrix(1 0 0 1.08 0 -64.208)">0.50</text>
<rect x="1687.5" y="131.25" width="590.62" height="1368.75" rx="15" fill="#13161d" filter="url(#sh)"/>
<path d="M1687.5 187.5v-41.25a15 15 0 0 1 15 -15h560.62a15 15 0 0 1 15 15v41.25z" fill="#171b22"/>
<rect x="1687.5" y="187.7" width="590.62" height="1.4" fill="#101217"/>
<circle cx="1715.62" cy="159.38" r="9.4" fill="#2e333b"/>
<path d="M1750.1 154.9L1762 147.2L1773.9 154.9Z" fill="#b4acc4"/>
<rect x="1751.4" y="154.9" width="21" height="2.6" fill="#a89cb8"/>
<rect x="1752.7" y="157.7" width="2.8" height="11.5" fill="#d8d0e4"/>
<rect x="1758.1" y="157.7" width="2.8" height="11.5" fill="#d8d0e4"/>
<rect x="1763.5" y="157.7" width="2.8" height="11.5" fill="#d8d0e4"/>
<rect x="1768.9" y="157.7" width="2.8" height="11.5" fill="#d8d0e4"/>
<rect x="1755.5" y="157.7" width="2.6" height="11.5" fill="#5a4870"/>
<rect x="1760.9" y="157.7" width="2.6" height="11.5" fill="#5a4870"/>
<rect x="1766.3" y="157.7" width="2.6" height="11.5" fill="#5a4870"/>
<rect x="1749.9" y="168.5" width="24" height="3.6" fill="#bdb3cc"/>
<text x="1787.4" y="169" font-size="26.25" fill="#a3a3a3" transform="matrix(1 0 0 1.03 0 -5.070)">Convolution Reverb</text>
<circle cx="1706.25" cy="213.75" r="7.6" fill="#7aff7a"/>
<text x="1725" y="223.22" font-size="22.5" fill="#c8ccd4" transform="matrix(1 0 0 1.08 0 -17.858)">audio</text>
<circle cx="2261.25" cy="213.75" r="7.4" fill="#7aff7a" stroke="#000" stroke-width="1.4"/>
<text x="2242.5" y="223.22" font-size="22.5" fill="#c8ccd4" text-anchor="end" transform="matrix(1 0 0 1.08 0 -17.858)">reverb_audio</text>
<circle cx="2261.25" cy="251.25" r="7.4" fill="#7a7886" stroke="#000" stroke-width="1.4"/>
<text x="2242.5" y="260.73" font-size="22.5" fill="#c8ccd4" text-anchor="end" transform="matrix(1 0 0 1.08 0 -20.858)">reverb_report</text>
<rect x="1715.62" y="273.75" width="534.38" height="37.5" rx="18.75" fill="#161a21" stroke="#30363e" stroke-width="1.8"/>
<path d="M1745.62 283.12L1726.88 292.5L1745.62 301.88z" fill="#c0c4cc"/>
<path d="M2220 283.12L2238.75 292.5L2220 301.88z" fill="#c0c4cc"/>
<text x="1753.12" y="300.1" font-size="22.5" fill="#a0a0a0" transform="matrix(1 0 0 1.08 0 -24.008)">reverb_type</text>
<text x="2184.38" y="300.1" font-size="22.5" fill="#c8ccd4" text-anchor="end" transform="matrix(1 0 0 1.08 0 -24.008)">cathedral</text>
<rect x="1715.62" y="318.75" width="534.38" height="37.5" rx="18.75" fill="#161a21" stroke="#30363e" stroke-width="1.8"/>
<path d="M1745.62 328.12L1726.88 337.5L1745.62 346.88z" fill="#2e343b"/>
<path d="M2220 328.12L2238.75 337.5L2220 346.88z" fill="#c0c4cc"/>
<text x="1753.12" y="345.1" font-size="22.5" fill="#a0a0a0" transform="matrix(1 0 0 1.08 0 -27.608)">convolution_mode</text>
<text x="2184.38" y="345.1" font-size="22.5" fill="#c8ccd4" text-anchor="end" transform="matrix(1 0 0 1.08 0 -27.608)">fft</text>
<rect x="1715.62" y="363.75" width="534.38" height="37.5" rx="18.75" fill="#161a21" stroke="#30363e" stroke-width="1.8"/>
<path d="M1745.62 373.12L1726.88 382.5L1745.62 391.88z" fill="#c0c4cc"/>
<path d="M2220 373.12L2238.75 382.5L2220 391.88z" fill="#c0c4cc"/>
<text x="1753.12" y="390.1" font-size="22.5" fill="#a0a0a0" transform="matrix(1 0 0 1.08 0 -31.208)">wet_dry_mix</text>
<text x="2184.38" y="390.1" font-size="22.5" fill="#c8ccd4" text-anchor="end" transform="matrix(1 0 0 1.08 0 -31.208)">0.60</text>
<rect x="1715.62" y="408.75" width="534.38" height="37.5" rx="18.75" fill="#161a21" stroke="#30363e" stroke-width="1.8"/>
<path d="M1745.62 418.12L1726.88 427.5L1745.62 436.88z" fill="#c0c4cc"/>
<path d="M2220 418.12L2238.75 427.5L2220 436.88z" fill="#c0c4cc"/>
<text x="1753.12" y="435.1" font-size="22.5" fill="#a0a0a0" transform="matrix(1 0 0 1.08 0 -34.808)">reverb_time</text>
<text x="2184.38" y="435.1" font-size="22.5" fill="#c8ccd4" text-anchor="end" transform="matrix(1 0 0 1.08 0 -34.808)">8.0</text>
<rect x="1715.62" y="453.75" width="534.38" height="37.5" rx="18.75" fill="#161a21" stroke="#30363e" stroke-width="1.8"/>
<path d="M1745.62 463.12L1726.88 472.5L1745.62 481.88z" fill="#c0c4cc"/>
<path d="M2220 463.12L2238.75 472.5L2220 481.88z" fill="#c0c4cc"/>
<text x="1753.12" y="480.1" font-size="22.5" fill="#a0a0a0" transform="matrix(1 0 0 1.08 0 -38.408)">pre_delay</text>
<text x="2184.38" y="480.1" font-size="22.5" fill="#c8ccd4" text-anchor="end" transform="matrix(1 0 0 1.08 0 -38.408)">0.100</text>
<rect x="1715.62" y="498.75" width="534.38" height="37.5" rx="18.75" fill="#161a21" stroke="#30363e" stroke-width="1.8"/>
<path d="M1745.62 508.12L1726.88 517.5L1745.62 526.88z" fill="#c0c4cc"/>
<path d="M2220 508.12L2238.75 517.5L2220 526.88z" fill="#c0c4cc"/>
<text x="1753.12" y="525.1" font-size="22.5" fill="#a0a0a0" transform="matrix(1 0 0 1.08 0 -42.008)">amplitude</text>
<text x="2184.38" y="525.1" font-size="22.5" fill="#c8ccd4" text-anchor="end" transform="matrix(1 0 0 1.08 0 -42.008)">0.80</text>
<rect x="1715.62" y="543.75" width="534.38" height="37.5" rx="18.75" fill="#161a21" stroke="#30363e" stroke-width="1.8"/>
<path d="M1745.62 553.12L1726.88 562.5L1745.62 571.88z" fill="#c0c4cc"/>
<path d="M2220 553.12L2238.75 562.5L2220 571.88z" fill="#c0c4cc"/>
<text x="1753.12" y="570.1" font-size="22.5" fill="#a0a0a0" transform="matrix(1 0 0 1.08 0 -45.608)">ir_length</text>
<text x="2184.38" y="570.1" font-size="22.5" fill="#c8ccd4" text-anchor="end" transform="matrix(1 0 0 1.08 0 -45.608)">4.0</text>
<rect x="1715.62" y="588.75" width="534.38" height="37.5" rx="18.75" fill="#161a21" stroke="#30363e" stroke-width="1.8"/>
<path d="M1745.62 598.12L1726.88 607.5L1745.62 616.88z" fill="#c0c4cc"/>
<path d="M2220 598.12L2238.75 607.5L2220 616.88z" fill="#c0c4cc"/>
<text x="1753.12" y="615.1" font-size="22.5" fill="#a0a0a0" transform="matrix(1 0 0 1.08 0 -49.208)">early_reflections</text>
<text x="2184.38" y="615.1" font-size="22.5" fill="#c8ccd4" text-anchor="end" transform="matrix(1 0 0 1.08 0 -49.208)">0.30</text>
<rect x="1715.62" y="633.75" width="534.38" height="37.5" rx="18.75" fill="#161a21" stroke="#30363e" stroke-width="1.8"/>
<path d="M1745.62 643.12L1726.88 652.5L1745.62 661.88z" fill="#c0c4cc"/>
<path d="M2220 643.12L2238.75 652.5L2220 661.88z" fill="#c0c4cc"/>
<text x="1753.12" y="660.1" font-size="22.5" fill="#a0a0a0" transform="matrix(1 0 0 1.08 0 -52.808)">late_reflections</text>
<text x="2184.38" y="660.1" font-size="22.5" fill="#c8ccd4" text-anchor="end" transform="matrix(1 0 0 1.08 0 -52.808)">0.70</text>
<rect x="1715.62" y="678.75" width="534.38" height="37.5" rx="18.75" fill="#161a21" stroke="#30363e" stroke-width="1.8"/>
<path d="M1745.62 688.12L1726.88 697.5L1745.62 706.88z" fill="#c0c4cc"/>
<path d="M2220 688.12L2238.75 697.5L2220 706.88z" fill="#c0c4cc"/>
<text x="1753.12" y="705.1" font-size="22.5" fill="#a0a0a0" transform="matrix(1 0 0 1.08 0 -56.408)">room_size</text>
<text x="2184.38" y="705.1" font-size="22.5" fill="#c8ccd4" text-anchor="end" transform="matrix(1 0 0 1.08 0 -56.408)">0.50</text>
<rect x="1715.62" y="723.75" width="534.38" height="37.5" rx="18.75" fill="#161a21" stroke="#30363e" stroke-width="1.8"/>
<path d="M1745.62 733.12L1726.88 742.5L1745.62 751.88z" fill="#c0c4cc"/>
<path d="M2220 733.12L2238.75 742.5L2220 751.88z" fill="#c0c4cc"/>
<text x="1753.12" y="750.1" font-size="22.5" fill="#a0a0a0" transform="matrix(1 0 0 1.08 0 -60.008)">damping</text>
<text x="2184.38" y="750.1" font-size="22.5" fill="#c8ccd4" text-anchor="end" transform="matrix(1 0 0 1.08 0 -60.008)">0.30</text>
<rect x="1715.62" y="768.75" width="534.38" height="37.5" rx="18.75" fill="#161a21" stroke="#30363e" stroke-width="1.8"/>
<path d="M1745.62 778.12L1726.88 787.5L1745.62 796.88z" fill="#c0c4cc"/>
<path d="M2220 778.12L2238.75 787.5L2220 796.88z" fill="#c0c4cc"/>
<text x="1753.12" y="795.1" font-size="22.5" fill="#a0a0a0" transform="matrix(1 0 0 1.08 0 -63.608)">diffusion</text>
<text x="2184.38" y="795.1" font-size="22.5" fill="#c8ccd4" text-anchor="end" transform="matrix(1 0 0 1.08 0 -63.608)">0.60</text>
<rect x="1715.62" y="813.75" width="534.38" height="37.5" rx="18.75" fill="#161a21" stroke="#30363e" stroke-width="1.8"/>
<path d="M1745.62 823.12L1726.88 832.5L1745.62 841.88z" fill="#c0c4cc"/>
<path d="M2220 823.12L2238.75 832.5L2220 841.88z" fill="#c0c4cc"/>
<text x="1753.12" y="840.1" font-size="22.5" fill="#a0a0a0" transform="matrix(1 0 0 1.08 0 -67.208)">modulation_rate</text>
<text x="2184.38" y="840.1" font-size="22.5" fill="#c8ccd4" text-anchor="end" transform="matrix(1 0 0 1.08 0 -67.208)">0.50</text>
<rect x="1715.62" y="858.75" width="534.38" height="37.5" rx="18.75" fill="#161a21" stroke="#30363e" stroke-width="1.8"/>
<path d="M1745.62 868.12L1726.88 877.5L1745.62 886.88z" fill="#c0c4cc"/>
<path d="M2220 868.12L2238.75 877.5L2220 886.88z" fill="#c0c4cc"/>
<text x="1753.12" y="885.1" font-size="22.5" fill="#a0a0a0" transform="matrix(1 0 0 1.08 0 -70.808)">modulation_depth</text>
<text x="2184.38" y="885.1" font-size="22.5" fill="#c8ccd4" text-anchor="end" transform="matrix(1 0 0 1.08 0 -70.808)">0.050</text>
<rect x="1715.62" y="903.75" width="534.38" height="37.5" rx="18.75" fill="#161a21" stroke="#30363e" stroke-width="1.8"/>
<path d="M1745.62 913.12L1726.88 922.5L1745.62 931.88z" fill="#c0c4cc"/>
<path d="M2220 913.12L2238.75 922.5L2220 931.88z" fill="#c0c4cc"/>
<text x="1753.12" y="930.1" font-size="22.5" fill="#a0a0a0" transform="matrix(1 0 0 1.08 0 -74.408)">high_cut</text>
<text x="2184.38" y="930.1" font-size="22.5" fill="#c8ccd4" text-anchor="end" transform="matrix(1 0 0 1.08 0 -74.408)">8000</text>
<rect x="1715.62" y="948.75" width="534.38" height="37.5" rx="18.75" fill="#161a21" stroke="#30363e" stroke-width="1.8"/>
<path d="M1745.62 958.12L1726.88 967.5L1745.62 976.88z" fill="#c0c4cc"/>
<path d="M2220 958.12L2238.75 967.5L2220 976.88z" fill="#c0c4cc"/>
<text x="1753.12" y="975.1" font-size="22.5" fill="#a0a0a0" transform="matrix(1 0 0 1.08 0 -78.008)">low_cut</text>
<text x="2184.38" y="975.1" font-size="22.5" fill="#c8ccd4" text-anchor="end" transform="matrix(1 0 0 1.08 0 -78.008)">100</text>
<rect x="1715.62" y="993.75" width="534.38" height="37.5" rx="18.75" fill="#161a21" stroke="#30363e" stroke-width="1.8"/>
<path d="M1745.62 1003.12L1726.88 1012.5L1745.62 1021.88z" fill="#c0c4cc"/>
<path d="M2220 1003.12L2238.75 1012.5L2220 1021.88z" fill="#c0c4cc"/>
<text x="1753.12" y="1020.1" font-size="22.5" fill="#a0a0a0" transform="matrix(1 0 0 1.08 0 -81.608)">stereo_width</text>
<text x="2184.38" y="1020.1" font-size="22.5" fill="#c8ccd4" text-anchor="end" transform="matrix(1 0 0 1.08 0 -81.608)">1.00</text>
<rect x="1715.62" y="1038.75" width="534.38" height="37.5" rx="18.75" fill="#161a21" stroke="#30363e" stroke-width="1.8"/>
<text x="1743.75" y="1065.1" font-size="22.5" fill="#a0a0a0" transform="matrix(1 0 0 1.08 0 -85.208)">freeze</text>
<text x="2203.12" y="1065.1" font-size="22.5" fill="#a0a0a0" text-anchor="end" transform="matrix(1 0 0 1.08 0 -85.208)">false</text>
<circle cx="2221.88" cy="1057.5" r="13.5" fill="#353535"/>
<rect x="1715.62" y="1083.75" width="534.38" height="37.5" rx="18.75" fill="#161a21" stroke="#30363e" stroke-width="1.8"/>
<text x="1743.75" y="1110.1" font-size="22.5" fill="#a0a0a0" transform="matrix(1 0 0 1.08 0 -88.808)">reverse</text>
<text x="2203.12" y="1110.1" font-size="22.5" fill="#a0a0a0" text-anchor="end" transform="matrix(1 0 0 1.08 0 -88.808)">false</text>
<circle cx="2221.88" cy="1102.5" r="13.5" fill="#353535"/>
<rect x="2437.5" y="131.25" width="590.62" height="682.5" rx="15" fill="#13161d" filter="url(#sh)"/>
<path d="M2437.5 187.5v-41.25a15 15 0 0 1 15 -15h560.62a15 15 0 0 1 15 15v41.25z" fill="#171b22"/>
<rect x="2437.5" y="187.7" width="590.62" height="1.4" fill="#101217"/>
<circle cx="2465.62" cy="159.38" r="9.4" fill="#2e333b"/>
<path d="M2498.7 147.2h21.5l4 4v21.5h-25.5z" fill="#6158a8"/>
<rect x="2502.7" y="147.2" width="16.5" height="9.8" fill="#3c2a60"/>
<rect x="2507.2" y="147.2" width="11.5" height="9.3" fill="#e8e0f0"/>
<rect x="2513.9" y="148.2" width="3.6" height="6.8" fill="#3c2660"/>
<rect x="2502.5" y="159.7" width="18" height="13" fill="#d8c8e6"/>
<rect x="2502.5" y="159.5" width="18" height="3.4" fill="#e0245a"/>
<text x="2537.4" y="169" font-size="26.25" fill="#a3a3a3" transform="matrix(1 0 0 1.03 0 -5.070)">Audio Save</text>
<circle cx="2456.25" cy="213.75" r="7.6" fill="#7aff7a"/>
<text x="2475" y="223.22" font-size="22.5" fill="#c8ccd4" transform="matrix(1 0 0 1.08 0 -17.858)">audio</text>
<circle cx="3011.25" cy="213.75" r="7.4" fill="#7a7886" stroke="#000" stroke-width="1.4"/>
<text x="2992.5" y="223.22" font-size="22.5" fill="#c8ccd4" text-anchor="end" transform="matrix(1 0 0 1.08 0 -17.858)">audio</text>
<circle cx="3011.25" cy="251.25" r="7.4" fill="#7a7886" stroke="#000" stroke-width="1.4"/>
<text x="2992.5" y="260.73" font-size="22.5" fill="#c8ccd4" text-anchor="end" transform="matrix(1 0 0 1.08 0 -20.858)">filepath</text>
<rect x="2465.62" y="273.75" width="534.38" height="37.5" rx="18.75" fill="#161a21" stroke="#30363e" stroke-width="1.8"/>
<text x="2493.75" y="300.1" font-size="22.5" fill="#a0a0a0" transform="matrix(1 0 0 1.08 0 -24.008)">filename_prefix</text>
<text x="2971.88" y="300.1" font-size="22.5" fill="#c8ccd4" text-anchor="end" transform="matrix(1 0 0 1.08 0 -24.008)">evolving_ambient_drone</text>
<rect x="2465.62" y="318.75" width="534.38" height="37.5" rx="18.75" fill="#161a21" stroke="#30363e" stroke-width="1.8"/>
<path d="M2495.62 328.12L2476.88 337.5L2495.62 346.88z" fill="#2e343b"/>
<path d="M2970 328.12L2988.75 337.5L2970 346.88z" fill="#c0c4cc"/>
<text x="2503.12" y="345.1" font-size="22.5" fill="#a0a0a0" transform="matrix(1 0 0 1.08 0 -27.608)">format</text>
<text x="2934.38" y="345.1" font-size="22.5" fill="#c8ccd4" text-anchor="end" transform="matrix(1 0 0 1.08 0 -27.608)">wav</text>
<rect x="570.72" y="90" width="203.3" height="37.25" rx="9" fill="#0f1d12"/>
<text x="581.32" y="117.5" font-size="22.5" fill="#ffffff" transform="matrix(1 0 0 1.08 0 -9.400)">comfyui_noisegen</text>
<rect x="1320.73" y="90" width="203.3" height="37.25" rx="9" fill="#0f1d12"/>
<text x="1331.33" y="117.5" font-size="22.5" fill="#ffffff" transform="matrix(1 0 0 1.08 0 -9.400)">comfyui_noisegen</text>
<rect x="2070.72" y="90" width="203.3" height="37.25" rx="9" fill="#0f1d12"/>
<text x="2081.32" y="117.5" font-size="22.5" fill="#ffffff" transform="matrix(1 0 0 1.08 0 -9.400)">comfyui_noisegen</text>
<rect x="2820.72" y="90" width="203.3" height="37.25" rx="9" fill="#0f1d12"/>
<text x="2831.32" y="117.5" font-size="22.5" fill="#ffffff" transform="matrix(1 0 0 1.08 0 -9.400)">comfyui_noisegen</text>
<text x="28.6" y="1409.9" font-size="18.75" fill="#888888">T: 0.00s</text>
<text x="28.6" y="1434.27" font-size="18.75" fill="#888888">I: 0</text>
<text x="28.6" y="1458.65" font-size="18.75" fill="#888888">N: 4 [4]</text>
<text x="28.6" y="1483.02" font-size="18.75" fill="#888888">V: 8</text>
<text x="28.6" y="1507.4" font-size="18.75" fill="#888888">FPS:60.61</text>
</svg></body></html>
